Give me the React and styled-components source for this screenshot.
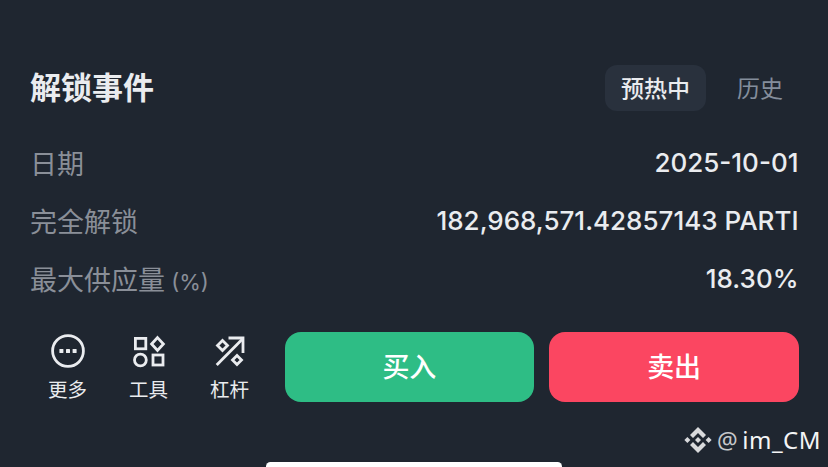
import React from "react";
import styled, { createGlobalStyle } from "styled-components";

const Global = createGlobalStyle`
  html, body { margin: 0; padding: 0; background: #1f2630; }
  body { font-family: Inter, "Noto Sans CJK SC", sans-serif; }
`;

const Page = styled.div`
  position: relative;
  width: 828px;
  height: 467px;
  overflow: hidden;
  background: #1f2630;
  box-sizing: border-box;
  padding: 65px 29px 0 30px;
  display: flex;
  flex-direction: column;
`;

const Header = styled.div`
  display: flex;
  align-items: center;
  justify-content: space-between;
  height: 46px;
`;

const Title = styled.div`
  font-size: 31px;
  font-weight: 600;
  line-height: 46px;
  color: #eaecef;
`;

const Tabs = styled.div`
  display: flex;
  align-items: center;
  gap: 15px;
`;

const Tab = styled.div`
  height: 46px;
  padding: 0 16px 2px;
  box-sizing: border-box;
  border-radius: 12px;
  display: flex;
  align-items: center;
  justify-content: center;
  font-size: 23px;
  font-weight: ${(p) => (p.$active ? 500 : 400)};
  color: ${(p) => (p.$active ? "#eaecef" : "#848e9c")};
  background: ${(p) => (p.$active ? "#29313d" : "transparent")};
`;

const Rows = styled.div`
  display: flex;
  flex-direction: column;
  margin-top: 22px;
`;

const Row = styled.div`
  height: 58px;
  display: flex;
  align-items: center;
  justify-content: space-between;
`;

const Label = styled.div`
  font-size: 27px;
  color: #8a8f98;
`;

const Unit = styled.span`
  font-size: 22px;
`;

const Value = styled.div`
  font-size: 26px;
  font-weight: 500;
  color: #eaecef;
  margin-right: 0.5px;
`;

const Actions = styled.div`
  display: flex;
  align-items: flex-start;
  margin-top: 25px;
  height: 70px;
`;

const Tools = styled.div`
  display: flex;
  width: 257.5px;
  margin-left: -3px;
  padding-top: 2px;
  flex-shrink: 0;
`;

const Tool = styled.div`
  width: 81px;
  display: flex;
  flex-direction: column;
  align-items: center;
  color: #eaecef;
  font-size: 19.5px;
  line-height: 28px;
  gap: 8px;
  svg { display: block; }
`;

const Trade = styled.div`
  flex: 1;
  height: 70px;
  padding-bottom: 3px;
  box-sizing: border-box;
  border-radius: 16px;
  display: flex;
  align-items: center;
  justify-content: center;
  color: #fff;
  font-size: 27px;
  font-weight: 500;
  background: ${(p) => (p.$sell ? "#fb4661" : "#2ebd85")};
`;

const TradeGroup = styled.div`
  flex: 1;
  display: flex;
  gap: 15px;
`;

const Watermark = styled.div`
  position: absolute;
  right: 7px;
  top: 424px;
  display: flex;
  align-items: center;
  gap: 5px;
  font-family: "Noto Sans", sans-serif;
  font-size: 24px;
  line-height: 32px;
  color: #f4f5f6;
  letter-spacing: 0.5px;
`;

const At = styled.span`
  color: #c6c8cb;
  font-size: 23px;
  margin-right: 4px;
`;

const HomeBar = styled.div`
  position: absolute;
  left: 266px;
  bottom: -4px;
  width: 296px;
  height: 9px;
  border-radius: 5px;
  background: #fff;
`;

const MoreIcon = () => (
  <svg width="34" height="34" viewBox="0 0 34 34" fill="none" stroke="#eaecef" strokeWidth="2.8">
    <circle cx="17" cy="17" r="15.4" />
    <g fill="#eaecef" stroke="none">
      <rect x="8.4" y="15" width="4" height="4" rx="0.6" />
      <rect x="15" y="15" width="4" height="4" rx="0.6" />
      <rect x="21.6" y="15" width="4" height="4" rx="0.6" />
    </g>
  </svg>
);

const ToolsIcon = () => (
  <svg width="34" height="34" viewBox="0 0 34 34" fill="none" stroke="#eaecef" strokeWidth="2.8">
    <rect x="3.4" y="4.4" width="10.4" height="10.4" />
    <path d="M25.5 3.6 L31.4 10 L25.5 16.4 L19.6 10 Z" />
    <circle cx="8.4" cy="26" r="5.9" />
    <rect x="21" y="21" width="10" height="10" />
  </svg>
);

const LeverIcon = () => (
  <svg width="34" height="34" viewBox="0 0 34 34" fill="none" stroke="#eaecef" strokeWidth="2.8">
    <path d="M3.7 31 L30 4.5" />
    <path d="M15.5 4 H30 V19" />
    <path d="M9.5 6.5 L14.5 11.5 L9.5 16.5 L4.5 11.5 Z" />
    <path d="M24 21.5 L28.5 26 L24 30.5 L19.5 26 Z" />
  </svg>
);

const BinanceMark = () => (
  <svg width="28" height="28" viewBox="0 0 28 28" fill="#d9dadc">
    <path d="M14 1 L22 9 L19 12 L14 7 L9 12 L6 9 Z" />
    <path d="M14 27 L22 19 L19 16 L14 21 L9 16 L6 19 Z" />
    <path d="M3.4 11 L6.4 14 L3.4 17 L0.4 14 Z" />
    <path d="M24.6 11 L27.6 14 L24.6 17 L21.6 14 Z" />
    <path d="M14 11 L17 14 L14 17 L11 14 Z" />
  </svg>
);

const rows = [
  ["日期", "2025-10-01"],
  ["完全解锁", "182,968,571.42857143 PARTI"],
  ["最大供应量", "18.30%", "(%)"],
];

export default function App() {
  return (
    <Page>
      <Global />
      <Header>
        <Title>解锁事件</Title>
        <Tabs>
          <Tab $active>预热中</Tab>
          <Tab>历史</Tab>
        </Tabs>
      </Header>
      <Rows>
        {rows.map(([label, value, unit]) => (
          <Row key={label}>
            <Label>
              {label}
              {unit && <Unit> {unit}</Unit>}
            </Label>
            <Value>{value}</Value>
          </Row>
        ))}
      </Rows>
      <Actions>
        <Tools>
          <Tool><MoreIcon />更多</Tool>
          <Tool><ToolsIcon />工具</Tool>
          <Tool><LeverIcon />杠杆</Tool>
        </Tools>
        <TradeGroup>
          <Trade>买入</Trade>
          <Trade $sell>卖出</Trade>
        </TradeGroup>
      </Actions>
      <Watermark>
        <BinanceMark />
        <span><At>@</At>im_CM</span>
      </Watermark>
      <HomeBar />
    </Page>
  );
}
